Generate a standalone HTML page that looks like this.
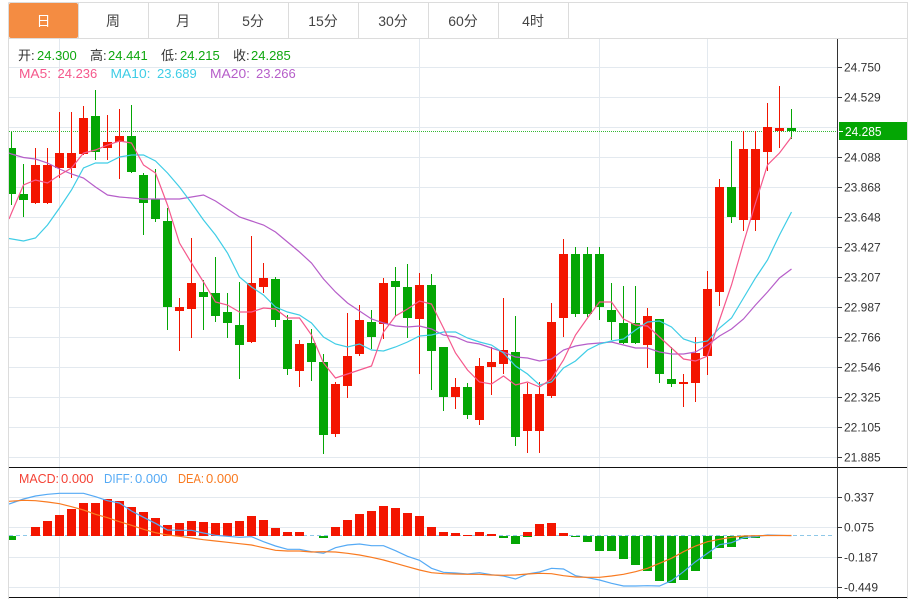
<!DOCTYPE html>
<html>
<head>
<meta charset="utf-8">
<style>
html,body{margin:0;padding:0;background:#fff;}
svg{display:block;font-family:"Liberation Sans","Noto Sans CJK SC",sans-serif;}
</style>
</head>
<body>
<svg width="917" height="599" viewBox="0 0 917 599" xmlns="http://www.w3.org/2000/svg">
<defs><clipPath id="plot"><rect x="9" y="39" width="828" height="558"/></clipPath></defs>
<rect width="917" height="599" fill="#fff"/>
<!-- grid -->
<path d="M9 67.5H837M9 97.5H837M9 127.5H837M9 157.5H837M9 187.5H837M9 217.5H837M9 247.5H837M9 277.5H837M9 307.5H837M9 337.5H837M9 367.5H837M9 397.5H837M9 427.5H837M9 457.5H837M9 497.5H837M9 527.5H837M9 557.5H837M9 587.5H837M59.5 39V597M419.5 39V597M599.5 39V597M707.5 39V597" stroke="#e3e9ef" stroke-width="1" fill="none"/>
<!-- frame -->
<path d="M8.5 2.5H907.5V599M8.5 2.5V599M9 38.5H907" stroke="#dcdcdc" fill="none"/>
<path d="M78.5 3V38M148.5 3V38M218.5 3V38M288.5 3V38M358.5 3V38M428.5 3V38M498.5 3V38M568.5 3V38" stroke="#dcdcdc" fill="none"/>
<rect x="9" y="3" width="69" height="35" rx="2" fill="#f48c42"/>
<g font-size="14" fill="#444" text-anchor="middle">
<text x="43.5" y="26" fill="#fff">日</text>
<text x="113" y="26">周</text>
<text x="183" y="26">月</text>
<text x="253" y="26">5分</text>
<text x="323" y="26">15分</text>
<text x="393" y="26">30分</text>
<text x="463" y="26">60分</text>
<text x="533" y="26">4时</text>
</g>
<!-- last price dotted -->
<path d="M9 131.5H838" stroke="#35b935" stroke-width="1" stroke-dasharray="1 1" fill="none"/>
<g clip-path="url(#plot)">
<!-- red wicks -->
<path fill="none" stroke="#f01500" stroke-width="1" d="M35.5 148V204M47.5 148V204M59.5 112V178M71.5 112V178M83.5 106V155M107.5 115V160M119.5 109V179M179.5 298V351M191.5 238V338M251.5 236V343M263.5 263V293M299.5 340V387M335.5 382V437M347.5 313V398M359.5 305V356M383.5 278V339M419.5 273V374M455.5 378V409M479.5 358V425M491.5 347V395M503.5 298V374M527.5 383V453M539.5 382V453M551.5 303V398M563.5 239V337M647.5 308V368M683.5 374V407M695.5 337V402M707.5 271V375M719.5 179V306M743.5 131V231M755.5 131V231M767.5 103V171M779.5 86V148"/>
<!-- green wicks -->
<path fill="none" stroke="#04a604" stroke-width="1" d="M11.5 132V205M23.5 164V217M95.5 90V160M131.5 105V173M143.5 173V235M155.5 169V222M167.5 208V330M203.5 280V330M215.5 257V322M227.5 293V338M239.5 282V379M275.5 277V327M287.5 315V375M311.5 329V381M323.5 354V454M371.5 310V349M395.5 267V316M407.5 264V338M431.5 274V390M443.5 347V411M467.5 383V419M515.5 316V446M575.5 247V317M587.5 247V317M599.5 247V320M611.5 283V340M623.5 286V344M635.5 286V344M659.5 319V383M671.5 347V387M731.5 141V223M791.5 109V139"/>
<!-- red bodies -->
<path fill="none" stroke="#f31500" stroke-width="9" d="M35.5 165V203M47.5 165V203M59.5 153V168M71.5 153V168M83.5 118V154M107.5 142V148M119.5 136V142M179.5 307V311M191.5 283V309M251.5 283V342M263.5 278V287M299.5 344V371M335.5 384V434M347.5 356V386M359.5 320V354M383.5 283V324M419.5 285V319M455.5 387V397M479.5 366V420M491.5 362V367M503.5 350V364M527.5 394V431M539.5 394V431M551.5 322V396M563.5 254V318M647.5 316V345M683.5 382V384M695.5 353V383M707.5 289V356M719.5 187V292M743.5 149V220M755.5 149V220M767.5 127V152M779.5 128V131"/>
<!-- green bodies -->
<path fill="none" stroke="#04a604" stroke-width="9" d="M11.5 148V194M23.5 194V200M95.5 116V152M131.5 136V172M143.5 175V203M155.5 199V219M167.5 221V307M203.5 292V297M215.5 293V316M227.5 312V323M239.5 325V345M275.5 279V320M287.5 320V369M311.5 343V362M323.5 362V435M371.5 322V337M395.5 281V287M407.5 287V318M431.5 285V351M443.5 347V397M467.5 387V415M515.5 352V437M575.5 254V314M587.5 254V314M599.5 254V307M611.5 310V322M623.5 323V343M635.5 323V343M659.5 319V374M671.5 379V384M731.5 187V217M791.5 128V131"/>
<!-- MA20 -->
<polyline fill="none" stroke="#b65ec9" stroke-width="1.2" points="9,153 11.5,154 23.5,157.5 35.5,159 47.5,163 59.5,169 71.5,174 83.5,178 95.5,187 107.5,195 119.5,197 131.5,198 143.5,199 155.5,199 167.5,199 179.5,199 191.5,197 203.5,195 215.5,201 227.5,209 239.5,217 251.5,221 263.5,225 275.5,232 287.5,242 299.5,252 311.5,263 323.5,279 335.5,292 347.5,303 359.5,311 371.5,319 383.5,323 395.5,326 407.5,327 419.5,326 431.5,329 443.5,335 455.5,337 467.5,342 479.5,344 491.5,348 503.5,352 515.5,357 527.5,358 539.5,361 551.5,359 563.5,350 575.5,346 587.5,344 599.5,343 611.5,342 623.5,345 635.5,348 647.5,348 659.5,352 671.5,354 683.5,354 695.5,352 707.5,345 719.5,336 731.5,329 743.5,319 755.5,305 767.5,292 779.5,278 791.5,269"/>
<!-- MA10 -->
<polyline fill="none" stroke="#3fcde6" stroke-width="1.2" points="9,238.5 23.5,241 35.5,238 47.5,225 59.5,208 71.5,190 83.5,168 95.5,163 107.5,163 119.5,157 131.5,155 143.5,155 155.5,161 167.5,173 179.5,187 191.5,203 203.5,220 215.5,235 227.5,253 239.5,277 251.5,287 263.5,295 275.5,307 287.5,312 299.5,315 311.5,323 323.5,337 335.5,344 347.5,347 359.5,344 371.5,350 383.5,351 395.5,347 407.5,342 419.5,336 431.5,335 443.5,332 455.5,332 467.5,338 479.5,342 491.5,345 503.5,353 515.5,366 527.5,374 539.5,385 551.5,382 563.5,368 575.5,361 587.5,350 599.5,344 611.5,341 623.5,339 635.5,330 647.5,322 659.5,321 671.5,327 683.5,339 695.5,343 707.5,341 719.5,328 731.5,318 743.5,298 755.5,278 767.5,260 779.5,235 791.5,212"/>
<!-- MA5 -->
<polyline fill="none" stroke="#f5588c" stroke-width="1.2" points="9,219 11.5,213 23.5,185 35.5,180 47.5,183 59.5,175 71.5,168 83.5,153 95.5,150 107.5,145 119.5,141 131.5,143 143.5,165 155.5,173 167.5,205 179.5,243 191.5,263 203.5,282 215.5,302 227.5,305 239.5,312 251.5,312 263.5,308 275.5,309 287.5,318 299.5,318 311.5,335 323.5,363 335.5,378 347.5,374 359.5,370 371.5,366 383.5,332 395.5,316 407.5,309 419.5,301 431.5,304 443.5,328 455.5,353 467.5,370 479.5,382 491.5,384 503.5,376 515.5,385 527.5,382 539.5,387 551.5,379 563.5,360 575.5,335 587.5,318 599.5,302 611.5,302 623.5,319 635.5,325 647.5,326 659.5,337 671.5,348 683.5,359 695.5,361 707.5,356 719.5,320 731.5,285 743.5,243 755.5,203 767.5,165 779.5,153 791.5,137"/>
<!-- MACD zero -->
<path d="M9 535.5H834" stroke="#8ec8e8" stroke-width="1" stroke-dasharray="4 3" fill="none"/>
<!-- MACD bars -->
<path fill="none" stroke="#f31500" stroke-width="9" d="M35.5 527V536M47.5 521V536M59.5 515V536M71.5 509V536M83.5 503V536M95.5 503V536M107.5 499V536M119.5 501V536M131.5 507V536M143.5 512V536M155.5 518V536M167.5 525V536M179.5 523V536M191.5 521V536M203.5 522V536M215.5 523V536M227.5 523V536M239.5 521V536M251.5 516V536M263.5 520V536M275.5 528V536M287.5 532V536M299.5 532V536M335.5 527V536M347.5 520V536M359.5 514V536M371.5 511V536M383.5 506V536M395.5 508V536M407.5 513V536M419.5 516V536M431.5 527V536M443.5 532V536M455.5 533V536M467.5 535V536M479.5 532V536M491.5 534V536M527.5 532V536M539.5 524V536M551.5 523V536M563.5 533V536"/>
<path fill="none" stroke="#04a604" stroke-width="9" d="M11.5 536V540M323.5 536V538M503.5 536V538M515.5 536V544M527.5 536V537M575.5 536V537M587.5 536V542M599.5 536V551M611.5 536V551M623.5 536V559M635.5 536V565M647.5 536V571M659.5 536V581M671.5 536V583M683.5 536V580M695.5 536V571M707.5 536V559M719.5 536V548M731.5 536V547M743.5 536V539M755.5 536V538"/>
<!-- DIFF -->
<polyline fill="none" stroke="#55aaf5" stroke-width="1.2" points="9,504 23.5,499 35.5,496 47.5,494.3 59.5,493.3 71.5,493.3 83.5,493.3 95.5,496.7 107.5,500.7 119.5,503 131.5,511 143.5,517.3 155.5,523.3 167.5,530 179.5,530.3 191.5,530.3 203.5,533 215.5,535.3 227.5,536.3 239.5,537.3 251.5,536.7 263.5,541.7 275.5,546 287.5,549.3 299.5,549.3 311.5,551.7 323.5,553.3 335.5,547.7 347.5,545 359.5,544 371.5,545.7 383.5,545.7 395.5,550.7 407.5,556.3 419.5,560.3 431.5,568.3 443.5,572.3 455.5,573 467.5,574 479.5,572.7 491.5,574.7 503.5,576 515.5,579 527.5,574 539.5,572 551.5,568.3 563.5,569 575.5,575.7 587.5,577.7 599.5,580 611.5,583.3 623.5,586 635.5,586 647.5,585.7 659.5,586 671.5,580.7 683.5,571.7 695.5,561.7 707.5,553.3 719.5,544.7 731.5,542.7 743.5,537.7 755.5,536.7 767.5,535 779.5,535.3 791.5,535.7"/>
<!-- DEA -->
<polyline fill="none" stroke="#f97a20" stroke-width="1.2" points="9,501.3 23.5,500.3 35.5,500.7 47.5,502 59.5,503.7 71.5,506.7 83.5,510 95.5,514.3 107.5,517.7 119.5,521.7 131.5,525.3 143.5,529.3 155.5,532.7 167.5,535 179.5,536.3 191.5,538 203.5,539.7 215.5,541 227.5,542.3 239.5,543.7 251.5,545 263.5,547.7 275.5,550.3 287.5,551 299.5,551 311.5,552 323.5,551.7 335.5,552 347.5,553.3 359.5,555 371.5,557.3 383.5,560 395.5,563.3 407.5,566.7 419.5,570 431.5,572.7 443.5,573.7 455.5,574 467.5,574.3 479.5,574.3 491.5,575 503.5,575.3 515.5,575 527.5,574 539.5,573.3 551.5,573.7 563.5,575.7 575.5,577 587.5,577.3 599.5,577.3 611.5,576 623.5,574.3 635.5,571.7 647.5,568.3 659.5,563.3 671.5,558.3 683.5,551.7 695.5,546 707.5,541.7 719.5,539.3 731.5,537.3 743.5,536 755.5,535.7 767.5,535.5 791.5,535.5"/>
</g>
<!-- separators -->
<path d="M9 467.5H907M9 597.5H907" stroke="#111" stroke-width="1" fill="none"/>
<path d="M837.5 39V599" stroke="#333" stroke-width="1" fill="none"/>
<path d="M838 67.5H842M838 97.5H842M838 157.5H842M838 187.5H842M838 217.5H842M838 247.5H842M838 277.5H842M838 307.5H842M838 337.5H842M838 367.5H842M838 397.5H842M838 427.5H842M838 457.5H842M838 497.5H842M838 527.5H842M838 557.5H842M838 587.5H842" stroke="#333" stroke-width="1" fill="none"/>
<!-- axis labels -->
<g font-size="12" fill="#333">
<text x="844" y="71.5">24.750</text>
<text x="844" y="101.5">24.529</text>
<text x="844" y="161.5">24.088</text>
<text x="844" y="191.5">23.868</text>
<text x="844" y="221.5">23.648</text>
<text x="844" y="251.5">23.427</text>
<text x="844" y="281.5">23.207</text>
<text x="844" y="311.5">22.987</text>
<text x="844" y="341.5">22.766</text>
<text x="844" y="371.5">22.546</text>
<text x="844" y="401.5">22.325</text>
<text x="844" y="431.5">22.105</text>
<text x="844" y="461.5">21.885</text>
<text x="844" y="501.5">0.337</text>
<text x="844" y="531.5">0.075</text>
<text x="844" y="561.5">-0.187</text>
<text x="844" y="591.5">-0.449</text>
</g>
<rect x="839" y="122" width="68" height="18" fill="#04a604"/>
<path d="M839 131.5H843" stroke="#fff" fill="none"/>
<text x="845" y="136" font-size="12.5" fill="#fff" textLength="36.5" lengthAdjust="spacingAndGlyphs">24.285</text>
<!-- legend -->
<g font-size="13">
<g fill="#333">
<text x="18" y="60">开:</text>
<text x="90" y="60">高:</text>
<text x="161" y="60">低:</text>
<text x="233" y="60">收:</text>
</g>
<g fill="#0ea70e">
<text x="37" y="60">24.300</text>
<text x="108" y="60">24.441</text>
<text x="180" y="60">24.215</text>
<text x="251" y="60">24.285</text>
</g>
<g fill="#f5588c">
<text x="19" y="78" textLength="32" lengthAdjust="spacingAndGlyphs">MA5:</text>
<text x="57.5" y="78">24.236</text>
</g>
<g fill="#3fcde6">
<text x="110.5" y="78" textLength="40" lengthAdjust="spacingAndGlyphs">MA10:</text>
<text x="157" y="78">23.689</text>
</g>
<g fill="#b65ec9">
<text x="210" y="78" textLength="40" lengthAdjust="spacingAndGlyphs">MA20:</text>
<text x="256" y="78">23.266</text>
</g>
<text x="19" y="483" fill="#f44336" textLength="40" lengthAdjust="spacingAndGlyphs">MACD:</text>
<text x="61" y="483" fill="#f44336">0.000</text>
<text x="104" y="483" fill="#55aaf5" textLength="29" lengthAdjust="spacingAndGlyphs">DIFF:</text>
<text x="135" y="483" fill="#55aaf5">0.000</text>
<text x="178" y="483" fill="#f97a20" textLength="26" lengthAdjust="spacingAndGlyphs">DEA:</text>
<text x="206" y="483" fill="#f97a20">0.000</text>
</g>
</svg>
</body>
</html>
